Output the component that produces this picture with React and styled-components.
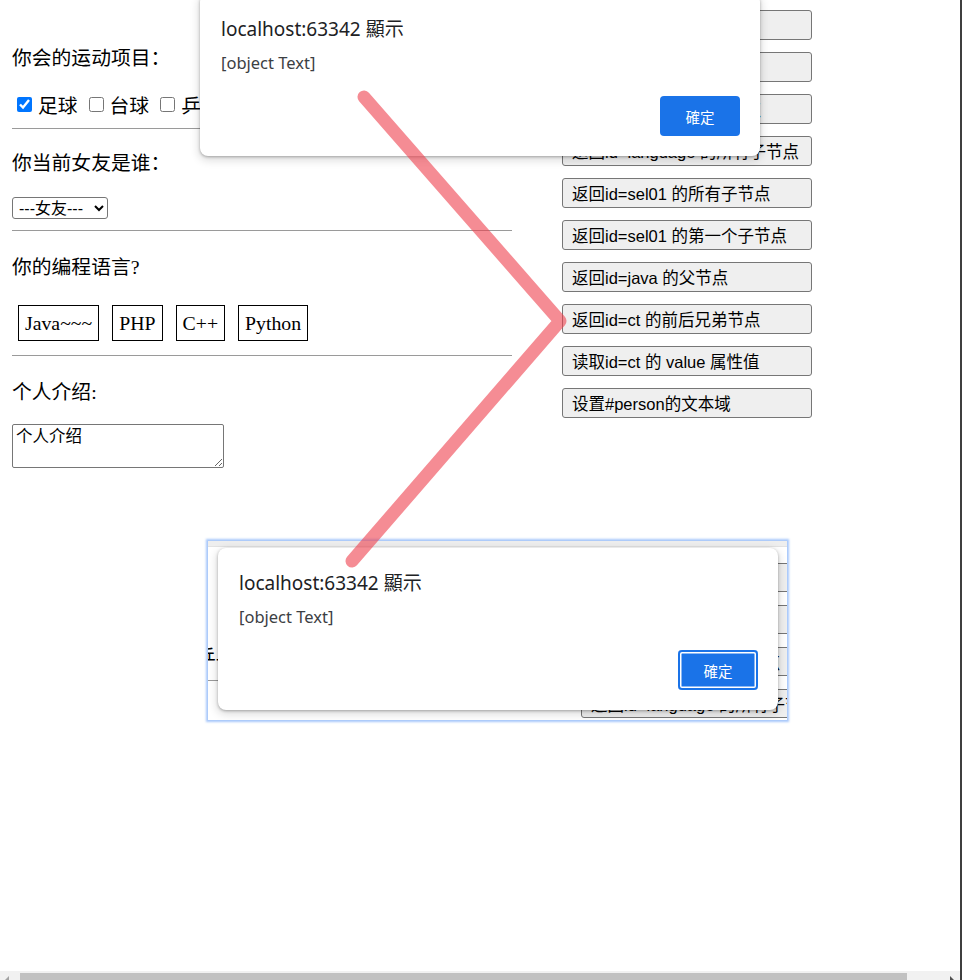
import React from "react";
import styled, { createGlobalStyle } from "styled-components";

const GlobalStyle = createGlobalStyle`
  html, body {
    margin: 0;
    padding: 0;
    background: #fff;
  }
  body {
    font-family: "Liberation Serif", "Noto Sans CJK SC", serif;
  }
`;

const Screen = styled.div`
  position: relative;
  width: 962px;
  height: 980px;
  box-sizing: border-box;
  border-right: 2px solid #3f3f3f;
  overflow: hidden;
  display: flex;
  flex-direction: column;
  background: #fff;
`;

const Viewport = styled.div`
  flex: 1;
  display: flex;
  align-items: flex-start;
  gap: 50px;
  padding-left: 12px;
`;

const FormColumn = styled.div`
  width: 500px;
  display: flex;
  flex-direction: column;
  padding-top: 38px;
`;

const Heading = styled.p`
  margin: ${(p) => p.$top || 0}px 0 0;
  height: 40px;
  line-height: 40px;
  font-size: 19.8px;
  color: #000;
`;

const CheckRow = styled.div`
  display: flex;
  align-items: center;
  height: 24px;
  margin-top: 14px;
  padding-left: 5px;
  font-size: 19.8px;
`;

const CheckItem = styled.label`
  display: inline-flex;
  align-items: center;
  gap: 6px;
  margin-right: 11px;
  white-space: nowrap;

  input {
    margin: 0;
    width: 15px;
    height: 15px;
  }
`;

const Select = styled.select`
  margin-top: 14px;
  width: 96px;
  height: 22px;
  box-sizing: border-box;
  padding: 0 0 0 2px;
  border: 1px solid #767676;
  border-radius: 3px;
  background: #fff;
  color: #000;
  font-family: "Liberation Sans", "Noto Sans CJK SC", sans-serif;
  font-size: 16px;
`;

const Rule = styled.hr`
  margin: ${(p) => p.$top || 0}px 0 0;
  width: ${(p) => p.$width || 500}px;
  border: 0;
  border-top: 1px solid #9a9a9a;
`;

const LangRow = styled.div`
  display: flex;
  gap: 13px;
  margin: 18px 0 0 6px;
`;

const LangBox = styled.span`
  height: 36px;
  box-sizing: border-box;
  padding: 0 6px;
  border: 1px solid #000;
  line-height: 34px;
  font-size: 19.8px;
  color: #000;
`;

const Intro = styled.textarea`
  margin-top: 12px;
  width: 212px;
  height: 44px;
  box-sizing: border-box;
  padding: 2px 3px;
  border: 1px solid #767676;
  border-radius: 2px;
  font-family: "Liberation Serif", "Noto Sans CJK SC", serif;
  font-size: 16.5px;
  line-height: 1.2;
  color: #000;
`;

const ButtonColumn = styled.div`
  width: 250px;
  display: flex;
  flex-direction: column;
  gap: ${(p) => p.$gap || 12}px;
  padding-top: ${(p) => p.$top || 10}px;
`;

const ActionButton = styled.button`
  height: ${(p) => p.$h || 30}px;
  box-sizing: border-box;
  padding: 0 9px;
  text-align: left;
  white-space: nowrap;
  overflow: hidden;
  background: #efefef;
  border: 1px solid #767676;
  border-radius: 3px;
  color: #000;
  font-family: "Liberation Sans", "Noto Sans CJK SC", sans-serif;
  font-size: 16.5px;
`;

/* ---- alert dialogs ---- */

const Dialog = styled.div`
  position: absolute;
  left: ${(p) => p.$x}px;
  top: ${(p) => p.$y}px;
  width: 560px;
  height: 162px;
  box-sizing: border-box;
  padding: 23px 20px 20px 21px;
  display: flex;
  flex-direction: column;
  background: #fff;
  border-radius: 8px;
  box-shadow: 0 1px 3px rgba(0, 0, 0, 0.3), 0 3px 8px 2px rgba(0, 0, 0, 0.12);
  font-family: "Noto Sans", "Noto Sans CJK TC", sans-serif;
`;

const DialogTitle = styled.div`
  height: 24px;
  line-height: 24px;
  font-size: 19px;
  color: #202124;
`;

const DialogText = styled.div`
  margin-top: 11px;
  height: 22px;
  line-height: 22px;
  font-size: 16.5px;
  color: #3c4043;
`;

const DialogFooter = styled.div`
  margin-top: auto;
  display: flex;
  justify-content: flex-end;
`;

const OkButton = styled.button`
  width: 80px;
  height: 40px;
  border: 0;
  border-radius: 4px;
  background: #1a73e8;
  color: #fff;
  font-family: "Noto Sans CJK TC", sans-serif;
  font-size: 14.5px;
  box-shadow: ${(p) =>
    p.$focused ? "inset 0 0 0 2px #1a73e8, inset 0 0 0 3.5px #fff" : "none"};
`;

function Alert({ x, y, focused }) {
  return (
    <Dialog $x={x} $y={y}>
      <DialogTitle>localhost:63342 顯示</DialogTitle>
      <DialogText>[object Text]</DialogText>
      <DialogFooter>
        <OkButton $focused={focused}>確定</OkButton>
      </DialogFooter>
    </Dialog>
  );
}

/* ---- captured second screenshot ---- */

const Capture = styled.div`
  position: absolute;
  left: 208px;
  top: 541px;
  width: 579px;
  height: 179px;
  overflow: hidden;
  background: #fff;
  box-shadow: 0 0 2px 2px rgba(138, 180, 248, 0.75);
`;

const CaptureStrip = styled.div`
  height: 5px;
  background: #eeeeee;
  border-bottom: 1px solid #e2e2e2;
`;

const CaptureBody = styled.div`
  display: flex;
`;

const CaptureLeft = styled.div`
  width: 373px;
  display: flex;
  flex-direction: column;
  padding-top: 98px;
`;

const Fragment = styled.div`
  height: 24px;
  line-height: 24px;
  margin-left: -12px;
  font-size: 19.8px;
  white-space: nowrap;
`;

/* ---- scrollbar ---- */

const ScrollBar = styled.div`
  height: 9px;
  flex: none;
  display: flex;
  align-items: flex-start;
  background: #f1f1f1;
`;

const ScrollArrow = styled.div`
  width: 17px;
  height: 9px;
  position: relative;

  &::after {
    content: "";
    position: absolute;
    top: 5px;
    left: ${(p) => (p.$right ? 7 : 5)}px;
    border-top: 4px solid transparent;
    border-bottom: 4px solid transparent;
    ${(p) =>
      p.$right
        ? "border-left: 4px solid #505050;"
        : "border-right: 4px solid #a3a3a3;"}
  }
`;

const ScrollThumb = styled.div`
  margin: 2px 0 0 3px;
  width: 887px;
  height: 7px;
  background: #c1c1c1;
`;

const ScrollGap = styled.div`
  flex: 1;
`;

const Annotation = styled.svg`
  position: absolute;
  left: 0;
  top: 0;
  pointer-events: none;
`;

const actions = [
  "返回id=bj 的节点",
  "返回所有 li 节点",
  "返回name=gender 的节点",
  "返回id=language 的所有子节点",
  "返回id=sel01 的所有子节点",
  "返回id=sel01 的第一个子节点",
  "返回id=java 的父节点",
  "返回id=ct 的前后兄弟节点",
  "读取id=ct 的 value 属性值",
  "设置#person的文本域",
];

export default function App() {
  return (
    <Screen>
      <GlobalStyle />
      <Viewport>
        <FormColumn>
          <Heading>你会的运动项目：</Heading>
          <CheckRow>
            <CheckItem>
              <input type="checkbox" defaultChecked />
              足球
            </CheckItem>
            <CheckItem>
              <input type="checkbox" />
              台球
            </CheckItem>
            <CheckItem>
              <input type="checkbox" />
              乒乓球
            </CheckItem>
          </CheckRow>
          <Rule $top={12} />
          <Heading $top={14}>你当前女友是谁：</Heading>
          <Select defaultValue="">
            <option value="">---女友---</option>
            <option value="a">西施</option>
          </Select>
          <Rule $top={11} />
          <Heading $top={16}>你的编程语言?</Heading>
          <LangRow>
            <LangBox>Java~~~</LangBox>
            <LangBox>PHP</LangBox>
            <LangBox>C++</LangBox>
            <LangBox>Python</LangBox>
          </LangRow>
          <Rule $top={14} />
          <Heading $top={16}>个人介绍:</Heading>
          <Intro defaultValue="个人介绍" />
        </FormColumn>
        <ButtonColumn>
          {actions.map((a) => (
            <ActionButton key={a}>{a}</ActionButton>
          ))}
        </ButtonColumn>
      </Viewport>
      <ScrollBar>
        <ScrollArrow />
        <ScrollThumb />
        <ScrollGap />
        <ScrollArrow $right />
      </ScrollBar>

      <Alert x={200} y={-6} />

      <Capture>
        <CaptureStrip />
        <CaptureBody>
          <CaptureLeft>
            <Fragment>乒乓球</Fragment>
            <Rule $top={11} $width={373} />
          </CaptureLeft>
          <ButtonColumn $gap={13} $top={16}>
            {actions.slice(0, 4).map((a) => (
              <ActionButton key={a} $h={29}>
                {a}
              </ActionButton>
            ))}
          </ButtonColumn>
        </CaptureBody>
        <Alert x={10} y={7} focused />
      </Capture>

      <Annotation width="962" height="980" viewBox="0 0 962 980">
        <polyline
          points="364,97 560,321 352,561"
          fill="none"
          stroke="rgba(238, 64, 76, 0.6)"
          strokeWidth="13"
          strokeLinecap="round"
          strokeLinejoin="round"
        />
      </Annotation>
    </Screen>
  );
}
